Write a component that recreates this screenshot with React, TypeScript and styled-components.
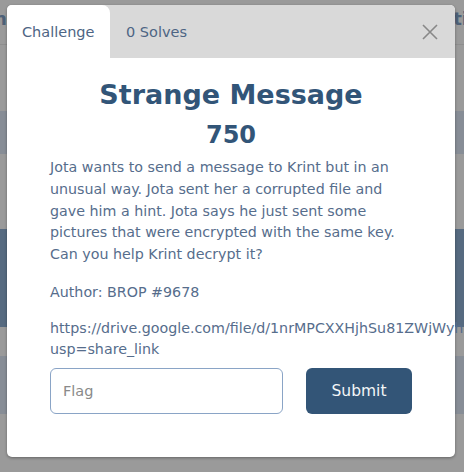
import React from "react";
import styled, { createGlobalStyle } from "styled-components";

const Global = createGlobalStyle`
  html, body { margin: 0; padding: 0; }
  body {
    width: 464px; height: 472px; overflow: hidden;
    background: #9a9a9a;
    font-family: "DejaVu Sans", "Open Sans", sans-serif;
  }
`;

const Page = styled.div`
  position: relative;
  width: 464px;
  height: 472px;
  overflow: hidden;
  background: #9a9a9a;
  display: flex;
  flex-direction: column;
`;

const TopStrip = styled.div`
  height: 45px;
  border-bottom: 1px solid #8e8e8e;
  display: flex;
  justify-content: space-between;
  align-items: center;
  padding: 0 0 8px;
  box-sizing: border-box;
  color: #4d6178;
  font-weight: 700;
  font-size: 18px;
`;

const Band = styled.div<{ $h: number; $mt: number; $color: string }>`
  height: ${(p) => p.$h}px;
  margin-top: ${(p) => p.$mt}px;
  background: ${(p) => p.$color};
`;

const Modal = styled.div`
  position: absolute;
  top: 5px;
  left: 7px;
  width: 448px;
  height: 452px;
  background: #fff;
  border-radius: 5px;
  box-shadow: 0 1px 3px rgba(0, 0, 0, 0.35);
  display: flex;
  flex-direction: column;
`;

const TabBar = styled.div`
  height: 53px;
  background: #d9d9d9;
  border-radius: 5px 5px 0 0;
  display: flex;
  align-items: stretch;
  position: relative;
`;

const Tab = styled.div<{ $active?: boolean }>`
  display: flex;
  align-items: center;
  padding: 0 15px;
  font-size: 14.5px;
  color: #4d6584;
  background: ${(p) => (p.$active ? "#fff" : "transparent")};
  border-radius: ${(p) => (p.$active ? "5px 8px 0 0" : "0")};
  width: ${(p) => (p.$active ? "73px" : "auto")};
  margin-left: ${(p) => (p.$active ? "0" : "1px")};
`;

const Close = styled.button`
  position: absolute;
  right: 16px;
  top: 18px;
  width: 18px;
  height: 18px;
  padding: 0;
  border: none;
  background: transparent;
  display: flex;
  align-items: center;
  justify-content: center;
`;

const Body = styled.div`
  padding: 19px 43px 0 43px;
  display: flex;
  flex-direction: column;
`;

const Title = styled.h1`
  margin: 0;
  text-align: center;
  font-size: 27px;
  font-weight: 800;
  color: #325578;
  line-height: 36px;
`;

const Points = styled.div`
  text-align: center;
  font-size: 24px;
  font-weight: 700;
  color: #325578;
  line-height: 30px;
  margin-top: 7px;
`;

const Para = styled.p`
  margin: 7px 0 0;
  font-size: 14.25px;
  line-height: 21.75px;
  color: #566d8c;
  white-space: nowrap;
`;

const Author = styled(Para)`
  margin-top: 16px;
`;

const Link = styled(Para)`
  margin-top: 14px;
  line-height: 21px;
`;

const Form = styled.form`
  display: flex;
  margin-top: 8px;
  gap: 23px;
`;

const Input = styled.input`
  width: 233px;
  height: 46px;
  box-sizing: border-box;
  border: 1px solid #8aa4c6;
  border-radius: 6px;
  padding: 0 12px;
  font-family: inherit;
  font-size: 14.5px;
  color: #333;
  outline: none;
  &::placeholder { color: #8a8a8a; }
`;

const Submit = styled.button`
  width: 106px;
  height: 46px;
  border: none;
  border-radius: 6px;
  background: #335577;
  color: #f4f6f8;
  font-family: inherit;
  font-size: 15.5px;
`;

export default function App() {
  return (
    <>
      <Global />
      <Page>
        <TopStrip>
          <span style={{ marginLeft: -6 }}>ng</span>
          <span style={{ marginRight: -4 }}>ti</span>
        </TopStrip>
        <Band $h={43} $mt={66} $color="#878d96" />
        <Band $h={98} $mt={75} $color="#566a80" />
        <Band $h={58} $mt={29} $color="#878d96" />
        <Modal>
          <TabBar>
            <Tab $active>Challenge</Tab>
            <Tab>0 Solves</Tab>
            <Close aria-label="Close">
              <svg width="16" height="16" viewBox="0 0 16 16">
                <path d="M1 1 L15 15 M15 1 L1 15" stroke="#888" strokeWidth="1.6" fill="none" />
              </svg>
            </Close>
          </TabBar>
          <Body>
            <Title>Strange Message</Title>
            <Points>750</Points>
            <Para>
              Jota wants to send a message to Krint but in an
              <br />
              unusual way. Jota sent her a corrupted file and
              <br />
              gave him a hint. Jota says he just sent some
              <br />
              pictures that were encrypted with the same key.
              <br />
              Can you help Krint decrypt it?
            </Para>
            <Author>Author: BROP #9678</Author>
            <Link>
              https://drive.google.com/file/d/1nrMPCXXHjhSu81ZWjWyhgT4aQ/view?
              <br />
              usp=share_link
            </Link>
            <Form onSubmit={(e) => e.preventDefault()}>
              <Input placeholder="Flag" />
              <Submit type="submit">Submit</Submit>
            </Form>
          </Body>
        </Modal>
      </Page>
    </>
  );
}
